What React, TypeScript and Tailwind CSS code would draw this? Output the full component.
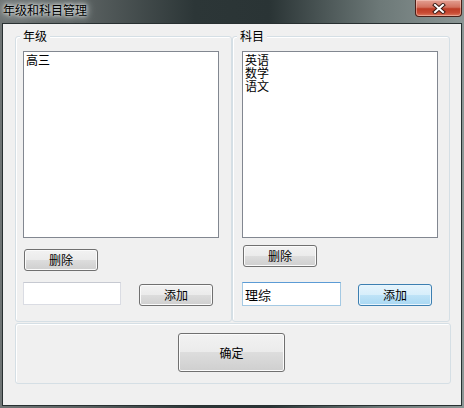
import React from 'react'

const font = { fontFamily: '"Noto Sans CJK SC", "Noto Sans", sans-serif' }

function Btn({ label, className = '', primary = false }: { label: string; className?: string; primary?: boolean }) {
  return (
    <button
      className={`flex items-center justify-center rounded-[3px] border text-[12px] leading-none text-black ${
        primary
          ? 'border-[#3c7fb1] bg-[linear-gradient(#e5f4fc_0%,#d7eefb_50%,#bfe3f7_50%,#a9d8f3_100%)] shadow-[inset_0_0_0_1px_#e9f5fd]'
          : 'border-[#707070] bg-[linear-gradient(#f2f2f2_0%,#ebebeb_50%,#dddddd_50%,#cfcfcf_100%)] shadow-[inset_0_0_0_1px_#fbfbfb]'
      } ${className}`}
    >
      {label}
    </button>
  )
}

function Group({ title, className = '', children }: { title?: string; className?: string; children: React.ReactNode }) {
  return (
    <div className={`relative rounded-[3px] border border-[#d5dfe5] shadow-[inset_1px_1px_0_#ffffff] ${className}`}>
      {title && (
        <span className="absolute left-[4px] -top-[8px] bg-[#f0f0f0] px-[3px] text-[12px] leading-[14px] text-black">
          {title}
        </span>
      )}
      {children}
    </div>
  )
}

function ListBox({ items }: { items: string[] }) {
  return (
    <div className="h-[187px] w-[196px] border border-[#828790] bg-white pl-[2px] pt-[1px] text-[12px] leading-[13px] text-black">
      {items.map((it) => (
        <div key={it} className="h-[13px]">{it}</div>
      ))}
    </div>
  )
}

export default function App() {
  return (
    <div
      style={font}
      className="flex h-[408px] w-[464px] flex-col bg-[linear-gradient(90deg,#6f7575_0%,#5a6161_18%,#2c3637_42%,#2a3435_58%,#6d7978_82%,#8b9695_100%)]"
    >
      {/* title bar */}
      <div className="relative h-[23px]">
        <span className="absolute left-[3px] top-[3px] text-[12px] leading-[14px] text-black [text-shadow:0_0_6px_#dfe4e4,0_0_10px_#dfe4e4,0_0_3px_#eef1f1]">
          年级和科目管理
        </span>
        <button className="absolute right-[2px] top-0 flex h-[17px] w-[47px] items-center justify-center rounded-b-[4px] border border-t-0 border-[#4a1f18] bg-[linear-gradient(#e3a093_0%,#d2715f_45%,#bd3c26_55%,#c84a33_80%,#dc7a5f_100%)] shadow-[inset_0_0_0_1px_rgba(255,220,210,0.45)]">
          <svg width="14" height="11" viewBox="0 0 14 11">
            <path d="M3 2 L11 9 M11 2 L3 9" stroke="#3a1a14" strokeWidth="4" strokeLinecap="square" />
            <path d="M3 2 L11 9 M11 2 L3 9" stroke="#ffffff" strokeWidth="2" strokeLinecap="square" />
          </svg>
        </button>
      </div>

      {/* client area */}
      <div className="mx-[2px] mb-[2px] flex-1 border border-[#283031] bg-[#f0f0f0]">
        <div className="flex pl-[12px] pt-[12px]">
          <Group title="年级" className="h-[286px] w-[217px] pl-[7px] pt-[14px]">
            <ListBox items={['高三']} />
            <Btn label="删除" className="ml-[1px] mt-[11px] h-[22px] w-[74px]" />
            <div className="mt-[11px] flex items-start">
              <input
                className="h-[23px] w-[98px] border border-[#dadce3] border-t-[#c6c9d1] bg-white px-[2px] text-[13px] outline-none"
                defaultValue=""
              />
              <Btn label="添加" className="ml-[18px] mt-[2px] h-[22px] w-[74px]" />
            </div>
          </Group>
          <Group title="科目" className="h-[286px] w-[218px] pl-[9px] pt-[14px]">
            <ListBox items={['英语', '数学', '语文']} />
            <Btn label="删除" className="ml-[1px] mt-[7px] h-[22px] w-[74px]" />
            <div className="mt-[15px] flex items-start">
              <input
                className="h-[24px] w-[99px] border border-[#a4c9e3] border-t-[#5b9bd5] bg-white px-[2px] text-[13px] leading-[20px] text-black outline-none"
                style={font}
                defaultValue="理综"
              />
              <Btn primary label="添加" className="ml-[17px] mt-[2px] h-[22px] w-[74px]" />
            </div>
          </Group>
        </div>
        <Group className="ml-[12px] mt-[1px] h-[61px] w-[436px] pl-[162px] pt-[9px]">
          <Btn label="确定" className="h-[39px] w-[107px]" />
        </Group>
      </div>
    </div>
  )
}
